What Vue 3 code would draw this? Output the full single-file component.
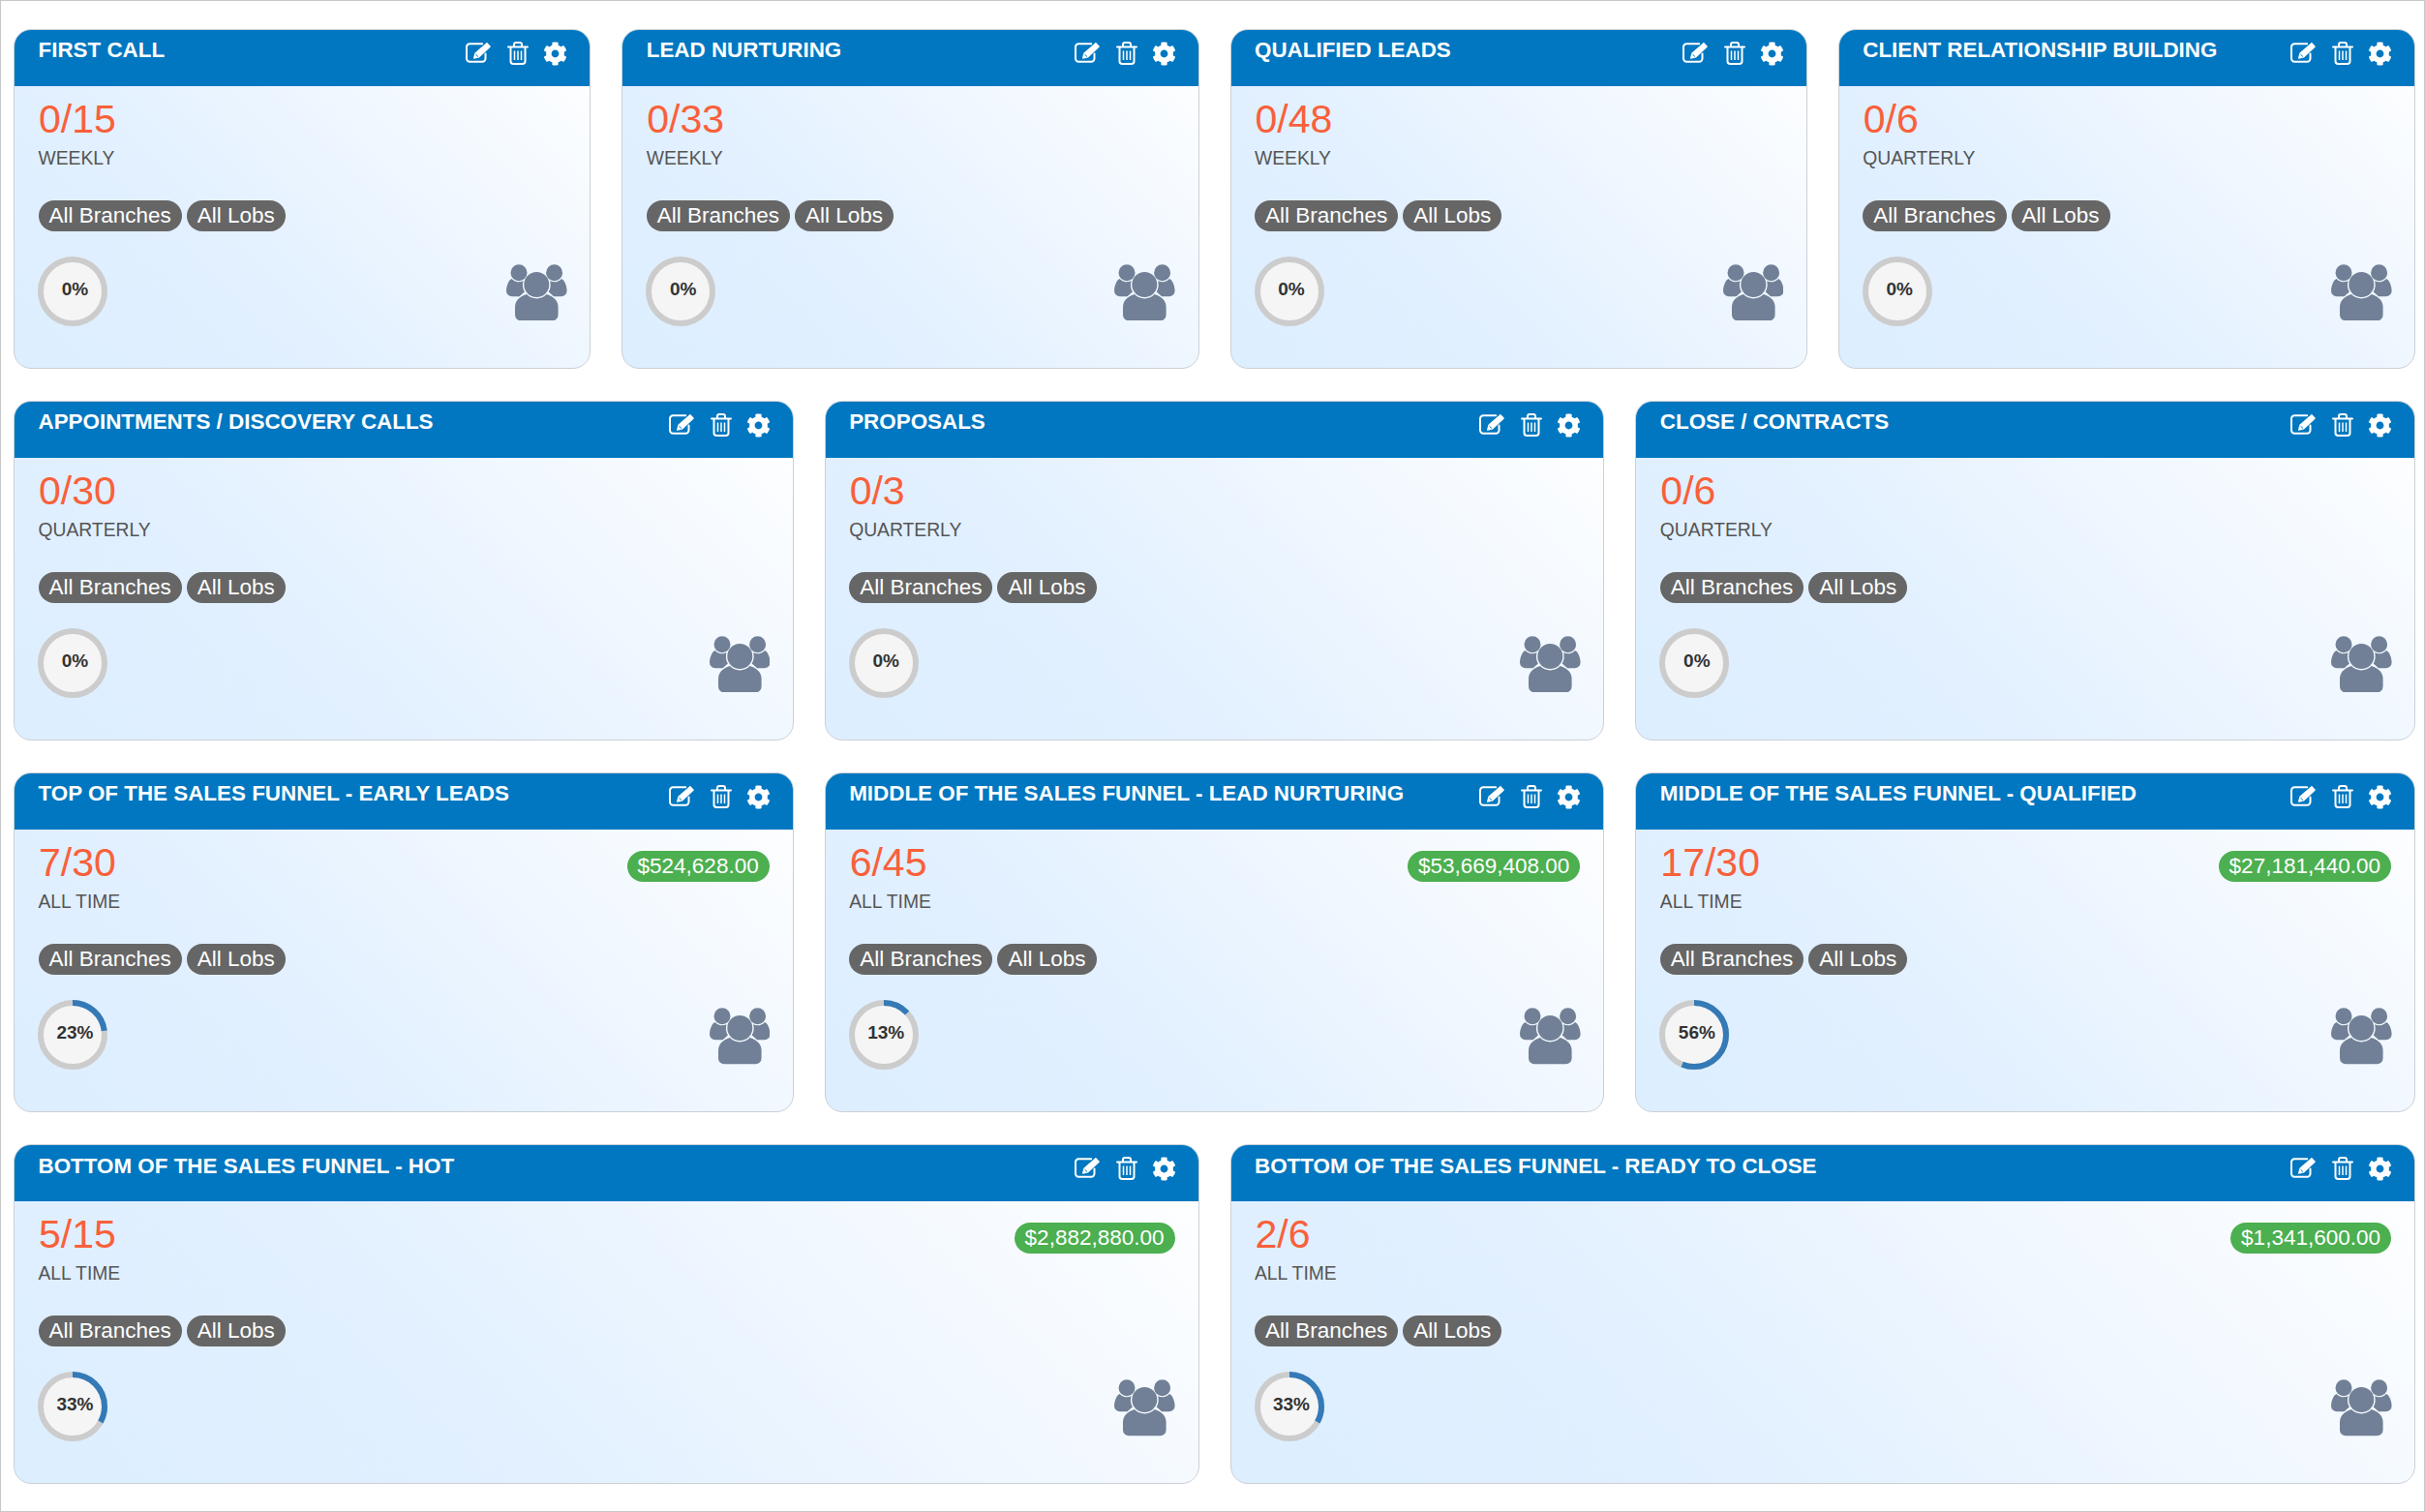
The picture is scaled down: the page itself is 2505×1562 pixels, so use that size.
<script setup>
const rows = [
  [
    { title: 'First Call', done: 0, goal: 15, period: 'Weekly' },
    { title: 'Lead Nurturing', done: 0, goal: 33, period: 'Weekly' },
    { title: 'Qualified Leads', done: 0, goal: 48, period: 'Weekly' },
    { title: 'Client Relationship Building', done: 0, goal: 6, period: 'Quarterly' },
  ],
  [
    { title: 'Appointments / Discovery Calls', done: 0, goal: 30, period: 'Quarterly' },
    { title: 'Proposals', done: 0, goal: 3, period: 'Quarterly' },
    { title: 'Close / Contracts', done: 0, goal: 6, period: 'Quarterly' },
  ],
  [
    { title: 'Top of the Sales Funnel - Early Leads', done: 7, goal: 30, period: 'All Time', value: '$524,628.00' },
    { title: 'Middle of the Sales Funnel - Lead Nurturing', done: 6, goal: 45, period: 'All Time', value: '$53,669,408.00' },
    { title: 'Middle of the Sales Funnel - Qualified', done: 17, goal: 30, period: 'All Time', value: '$27,181,440.00' },
  ],
  [
    { title: 'Bottom of the Sales Funnel - Hot', done: 5, goal: 15, period: 'All Time', value: '$2,882,880.00' },
    { title: 'Bottom of the Sales Funnel - Ready to Close', done: 2, goal: 6, period: 'All Time', value: '$1,341,600.00' },
  ],
]

const tags = ['All Branches', 'All Lobs']
const ringLength = 2 * Math.PI * 33

function percent(card) {
  return Math.floor((card.done / card.goal) * 100)
}

function dash(card) {
  return `${(percent(card) / 100) * ringLength} ${ringLength}`
}
</script>

<template>
  <main class="page">
    <section v-for="(row, r) in rows" :key="r" class="row">
      <article v-for="card in row" :key="card.title" class="card">
        <header class="card-head">
          <h3 class="title">{{ card.title }}</h3>
          <div class="actions">
            <svg class="icon-edit" viewBox="0 0 28 22" fill="none">
              <path d="M20.5 12.5v5a3.2 3.2 0 0 1-3.2 3.2H4.2A3.2 3.2 0 0 1 1 17.5V5.500a3.2 3.2 0 0 1 3.2-3.2h13" stroke="#fff" stroke-width="2" stroke-linecap="round" />
              <path d="M9.400 11.800 21.200 1.400c.5-.4 1-.4 1.400 0l2.900 3c.4.4.4.9 0 1.300L14 16.400l-5.200 1.300c-.6.1-.9-.2-.8-.7z" fill="#fff" />
              <path d="M10.500 13.200 13 15.600" stroke="#0077c0" stroke-width="1" />
            </svg>
            <svg class="icon-trash" viewBox="0 0 22 24" fill="none">
              <path d="M1 5.500h20" stroke="#fff" stroke-width="2" stroke-linecap="round" />
              <path d="M7 5V3a2 2 0 0 1 2-2h4a2 2 0 0 1 2 2v2" stroke="#fff" stroke-width="2" />
              <path d="M3.500 6v14.200A2.800 2.800 0 0 0 6.300 23h9.400a2.800 2.800 0 0 0 2.800-2.800V6" stroke="#fff" stroke-width="2" />
              <path d="M7.500 9.500v9.500M11 9.500v9.500M14.500 9.500v9.500" stroke="#fff" stroke-width="1.500" />
            </svg>
            <svg class="icon-gear" viewBox="0 0 512 512">
              <path fill="#fff" d="M487.4 315.7l-42.6-24.6c4.3-23.2 4.3-47 0-70.2l42.6-24.6c4.9-2.8 7.1-8.6 5.5-14-11.1-35.6-30-67.8-54.7-94.6-3.8-4.1-10-5.1-14.8-2.3L380.8 110c-17.9-15.4-38.5-27.3-60.8-35.1V25.8c0-5.6-3.9-10.5-9.4-11.7-36.7-8.2-74.3-7.8-109.2 0-5.5 1.2-9.4 6.1-9.4 11.7V75c-22.2 7.9-42.8 19.8-60.8 35.1L88.7 85.5c-4.9-2.8-11-1.9-14.8 2.3-24.7 26.7-43.6 58.9-54.7 94.6-1.7 5.4.6 11.2 5.5 14L67.3 221c-4.3 23.2-4.3 47 0 70.2l-42.6 24.6c-4.9 2.8-7.1 8.6-5.5 14 11.1 35.6 30 67.8 54.7 94.6 3.8 4.1 10 5.1 14.8 2.3l42.6-24.6c17.9 15.4 38.5 27.3 60.8 35.1v49.2c0 5.6 3.9 10.5 9.4 11.7 36.7 8.2 74.3 7.8 109.2 0 5.5-1.2 9.4-6.1 9.4-11.7v-49.2c22.2-7.9 42.8-19.8 60.8-35.1l42.6 24.6c4.9 2.8 11 1.9 14.8-2.3 24.7-26.7 43.6-58.9 54.7-94.6 1.5-5.5-.7-11.3-5.6-14.1zM256 336c-44.1 0-80-35.9-80-80s35.9-80 80-80 80 35.9 80 80-35.9 80-80 80z" />
            </svg>
          </div>
        </header>

        <div class="card-body">
          <div class="summary">
            <div>
              <p class="count">{{ card.done }}/{{ card.goal }}</p>
              <p class="period">{{ card.period }}</p>
            </div>
            <span v-if="card.value" class="value">{{ card.value }}</span>
          </div>

          <div class="tags">
            <span v-for="tag in tags" :key="tag" class="tag">{{ tag }}</span>
          </div>

          <div class="bottom">
            <div class="ring">
              <svg viewBox="0 0 72 72">
                <circle cx="36" cy="36" r="33" fill="#f5f5f5" stroke="#ccc" stroke-width="6" />
                <circle
                  v-if="card.done"
                  cx="36"
                  cy="36"
                  r="33"
                  fill="none"
                  stroke="#337ab7"
                  stroke-width="6"
                  :stroke-dasharray="dash(card)"
                  transform="rotate(-90 36 36)"
                />
              </svg>
              <span class="ring-label">{{ percent(card) }}%</span>
            </div>
            <svg class="people" viewBox="0 0 62.600 58.300" fill="#718096">
              <circle cx="13" cy="8.700" r="8.500" />
              <circle cx="49.600" cy="8.700" r="8.500" />
              <path d="M17.500 17.200A9.800 9.800 0 0 1 5.500 15Q3.500 16 2.500 18C1 21 0 24 0 27.500A5.800 5.800 0 0 0 5.800 33.300H13.500L18.900 28.500A14.300 14.300 0 0 1 17.500 17.200z" />
              <path d="M45.100 17.200A9.800 9.800 0 0 0 57.100 15Q59.100 16 60.100 18C61.600 21 62.600 24 62.600 27.500A5.800 5.800 0 0 1 56.800 33.300H49.100L43.700 28.500A14.300 14.300 0 0 0 45.100 17.200z" />
              <circle cx="31.300" cy="21" r="13" />
              <path d="M9 52.300v-8C9 38 13 33.500 21 31A14.300 14.300 0 0 0 41.600 31C49.600 33.500 53.600 38 53.600 44.300v8a6 6 0 0 1-6 6H15a6 6 0 0 1-6-6z" />
            </svg>
          </div>
        </div>
      </article>
    </section>
  </main>
</template>

<style>
html,
body {
  margin: 0;
  background: #fff;
}
</style>

<style scoped>
.page {
  box-sizing: border-box;
  width: 2505px;
  height: 1562px;
  padding: 28.500px 9px 0 13px;
  border: 1px solid #c8c8c8;
  display: flex;
  flex-direction: column;
  gap: 33.200px;
  overflow: hidden;
  font-family: "Liberation Sans", Arial, sans-serif;
}

.row {
  display: flex;
  gap: 32px;
}

.card {
  flex: 1 1 0;
  min-width: 0;
  height: 351px;
  box-sizing: border-box;
  border: 1px solid #cbd0d6;
  border-radius: 18px;
  overflow: hidden;
  display: flex;
  flex-direction: column;
  background: linear-gradient(45deg, #dceeff 0%, #e2f0ff 35%, #ffffff 100%);
}

.card-head {
  margin: -1px -1px 0;
  height: 59px;
  flex: none;
  box-sizing: border-box;
  padding: 0 24px 0 25.500px;
  background: #0077c0;
  display: flex;
  justify-content: space-between;
  align-items: flex-start;
}

.title {
  margin: 9.500px 0 0;
  color: #fff;
  font-size: 22.400px;
  line-height: 26px;
  font-weight: 700;
  text-transform: uppercase;
}

.actions {
  margin-top: 13px;
  display: flex;
  align-items: flex-start;
  gap: 15px;
}

.icon-edit {
  width: 28px;
  height: 22px;
}

.icon-trash {
  width: 22px;
  height: 24px;
}

.icon-gear {
  width: 25px;
  height: 25px;
}

.card-body {
  padding: 10px 24px 0 24.500px;
}

.summary {
  height: 76px;
  display: flex;
  justify-content: space-between;
  align-items: flex-start;
}

.count {
  margin: 0 0 0 0.500px;
  color: #f9603a;
  font-size: 41px;
  line-height: 48px;
}

.period {
  margin: 5px 0 0;
  color: #555;
  font-size: 19.300px;
  line-height: 24px;
  text-transform: uppercase;
}

.value {
  margin-top: 12px;
  padding: 0 11px;
  border-radius: 16px;
  background: #4caf50;
  color: #fff;
  font-size: 22.500px;
  line-height: 32px;
}

.tags {
  margin-top: 32px;
  display: flex;
  gap: 5px;
}

.tag {
  padding: 0 11px;
  border-radius: 16px;
  background: #666;
  color: #fff;
  font-size: 22.500px;
  line-height: 32px;
}

.bottom {
  margin-top: 26px;
  display: flex;
  justify-content: space-between;
  align-items: center;
}

.ring {
  position: relative;
  width: 72px;
  height: 72px;
  margin-left: -0.500px;
}

.ring svg {
  display: block;
  width: 72px;
  height: 72px;
}

.ring-label {
  position: absolute;
  inset: 0 0 4px 5px;
  display: flex;
  align-items: center;
  justify-content: center;
  color: #333;
  font-size: 19px;
  font-weight: 700;
}

.people {
  width: 62.600px;
  height: 58.300px;
  margin-right: -0.500px;
  margin-top: 3px;
}
</style>
